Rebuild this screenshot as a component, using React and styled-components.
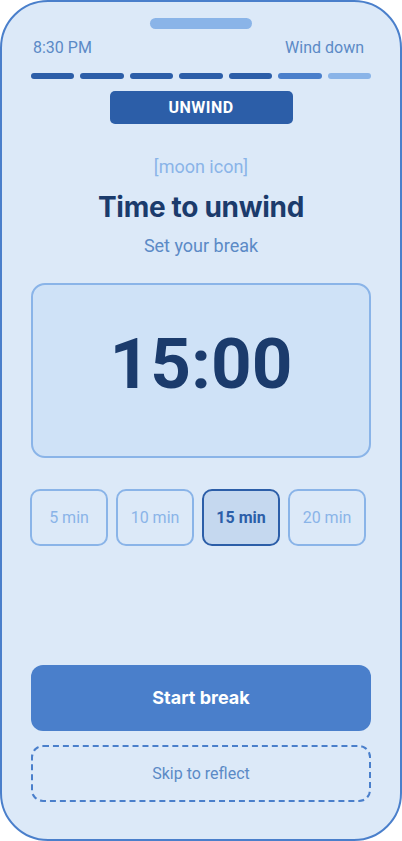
import React from "react";
import styled, { createGlobalStyle } from "styled-components";

const Global = createGlobalStyle`
  html, body { margin: 0; padding: 0; background: #ffffff; }
  body { font-family: Roboto, "Liberation Sans", sans-serif; }
  * { box-sizing: border-box; }
`;

const Frame = styled.div`
  width: 402px;
  height: 841px;
  border: 2px solid #4a7fcb;
  border-radius: 48px;
  background: #dce9f8;
  padding: 0 29px 37px;
  display: flex;
  flex-direction: column;
  align-items: stretch;
  overflow: hidden;
`;

const Notch = styled.div`
  align-self: center;
  margin-top: 16px;
  width: 102px;
  height: 11px;
  border-radius: 6px;
  background: #8ab4e8;
`;

const StatusRow = styled.div`
  margin-top: 9px;
  padding: 0 7px 0 2px;
  display: flex;
  justify-content: space-between;
  font-size: 16px;
  line-height: 19px;
  color: #5b8ac6;
`;

const Progress = styled.div`
  margin-top: 16px;
  display: grid;
  grid-template-columns: repeat(7, 1fr);
  gap: 6px;
`;

const Segment = styled.div`
  height: 6px;
  border-radius: 3px;
  background: ${(p) => p.$color};
`;

const Pill = styled.div`
  align-self: center;
  margin-top: 12px;
  width: 183px;
  height: 33px;
  border-radius: 5px;
  background: #2c5ea8;
  color: #ffffff;
  font-weight: 700;
  font-size: 16px;
  letter-spacing: 0.5px;
  display: flex;
  align-items: center;
  justify-content: center;
`;

const IconLabel = styled.div`
  margin-top: 32px;
  text-align: center;
  font-size: 18px;
  line-height: 21px;
  color: #8ab4e8;
`;

const Title = styled.h1`
  margin: 13px 0 0;
  text-align: center;
  font-family: Inter, Roboto, sans-serif;
  font-size: 28px;
  line-height: 34px;
  font-weight: 700;
  letter-spacing: -0.3px;
  color: #1b3b6c;
`;

const Subtitle = styled.div`
  margin-top: 11px;
  text-align: center;
  font-size: 18px;
  line-height: 21px;
  color: #5b8ac6;
`;

const TimerBox = styled.div`
  margin-top: 27px;
  height: 175px;
  border: 2px solid #8ab4e8;
  border-radius: 14px;
  background: #cfe2f7;
  display: flex;
  justify-content: center;
  padding-top: 37px;
`;

const TimerText = styled.div`
  font-size: 71px;
  line-height: 84px;
  font-weight: 700;
  color: #1b3b6c;
`;

const Chips = styled.div`
  margin-top: 31px;
  margin-left: -1px;
  display: flex;
  gap: 8px;
`;

const Chip = styled.div`
  width: 78px;
  height: 57px;
  border-radius: 10px;
  border: 2px solid ${(p) => (p.$active ? "#2c5ea8" : "#8ab4e8")};
  background: ${(p) => (p.$active ? "#c5d8ef" : "transparent")};
  color: ${(p) => (p.$active ? "#2c5ea8" : "#8ab4e8")};
  font-weight: ${(p) => (p.$active ? 700 : 400)};
  font-size: 16px;
  display: flex;
  align-items: center;
  justify-content: center;
`;

const PrimaryButton = styled.div`
  margin-top: auto;
  height: 66px;
  border-radius: 12px;
  background: #4a7fcb;
  color: #ffffff;
  font-family: Inter, Roboto, sans-serif;
  font-weight: 700;
  font-size: 18px;
  display: flex;
  align-items: center;
  justify-content: center;
  padding-bottom: 2px;
`;

const GhostButton = styled.div`
  margin-top: 14px;
  height: 57px;
  border-radius: 12px;
  border: 2px dashed #4a7fcb;
  color: #5b8ac6;
  font-size: 16px;
  display: flex;
  align-items: center;
  justify-content: center;
`;

const segments = ["#2c5ea8", "#2c5ea8", "#2c5ea8", "#2c5ea8", "#2c5ea8", "#4a7fcb", "#8ab4e8"];
const options = [
  { label: "5 min", active: false },
  { label: "10 min", active: false },
  { label: "15 min", active: true },
  { label: "20 min", active: false },
];

export default function App() {
  return (
    <>
      <Global />
      <Frame>
        <Notch />
        <StatusRow>
          <span>8:30 PM</span>
          <span>Wind down</span>
        </StatusRow>
        <Progress>
          {segments.map((c, i) => (
            <Segment key={i} $color={c} />
          ))}
        </Progress>
        <Pill>UNWIND</Pill>
        <IconLabel>[moon icon]</IconLabel>
        <Title>Time to unwind</Title>
        <Subtitle>Set your break</Subtitle>
        <TimerBox>
          <TimerText>15:00</TimerText>
        </TimerBox>
        <Chips>
          {options.map((o) => (
            <Chip key={o.label} $active={o.active}>
              {o.label}
            </Chip>
          ))}
        </Chips>
        <PrimaryButton>Start break</PrimaryButton>
        <GhostButton>Skip to reflect</GhostButton>
      </Frame>
    </>
  );
}
